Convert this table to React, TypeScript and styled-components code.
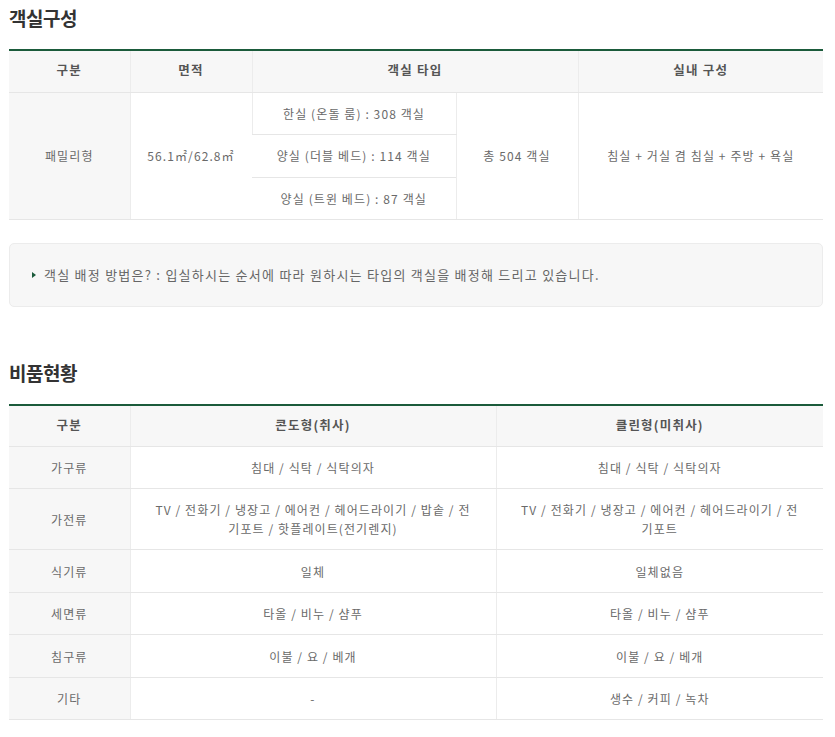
import styled, { createGlobalStyle } from 'styled-components';

const GlobalStyle = createGlobalStyle`
  body {
    margin: 0;
    background: #fff;
    font-family: "Noto Sans CJK KR", "Noto Sans", sans-serif;
    color: #666;
  }
`;

const Page = styled.div`
  width: 814px;
  padding: 0 12px 0 9px;
`;

const Section = styled.section`
  padding-top: 6px;
`;

const Title = styled.h2`
  margin: 0 0 19px;
  font-size: 19px;
  line-height: 24px;
  font-weight: 700;
  color: #333;
  letter-spacing: -0.5px;
`;

const Table = styled.table`
  width: 100%;
  border-collapse: collapse;
  table-layout: fixed;
  border-top: 2px solid #1b5b3b;
  font-size: 12px;
`;

const Row = styled.tr<{ $h?: number }>`
  height: ${(p) => p.$h ?? 42}px;
`;

const Th = styled.th`
  background: #f7f7f7;
  color: #555;
  font-weight: 700;
  font-size: 12.5px;
  letter-spacing: 1.2px;
  border-bottom: 1px solid #e6e6e6;
  border-left: 1px solid #ececec;
  padding: 0 10px 3px;
  &:first-child {
    border-left: none;
  }
`;

const Td = styled.td<{ $head?: boolean }>`
  background: ${(p) => (p.$head ? '#f7f7f7' : '#fff')};
  color: #6a6a6a;
  text-align: center;
  letter-spacing: 1.1px;
  line-height: 19px;
  border-bottom: 1px solid #e6e6e6;
  border-left: 1px solid #ececec;
  padding: 0 8px;
  &:first-child {
    border-left: none;
  }
`;

const InfoBox = styled.div`
  box-sizing: border-box;
  margin: 23px 0 48px;
  height: 64px;
  display: flex;
  align-items: center;
  gap: 8px;
  padding: 0 22px;
  background: #f7f7f7;
  border: 1px solid #ececec;
  border-radius: 5px;
  font-size: 13px;
  letter-spacing: 1.25px;
  color: #666;
`;

const Bullet = styled.span`
  width: 0;
  height: 0;
  border-top: 3px solid transparent;
  border-bottom: 3px solid transparent;
  border-left: 4px solid #1b5b3b;
  margin-top: 1px;
`;

const roomTypes = [
  '한실 (온돌 룸) : 308 객실',
  '양실 (더블 베드) : 114 객실',
  '양실 (트윈 베드) : 87 객실',
];

const amenities = [
  { kind: '가구류', h: 42, condo: '침대 / 식탁 / 식탁의자', clean: '침대 / 식탁 / 식탁의자' },
  {
    kind: '가전류',
    h: 61,
    condo: ['TV / 전화기 / 냉장고 / 에어컨 / 헤어드라이기 / 밥솥 / 전', '기포트 / 핫플레이트(전기렌지)'],
    clean: ['TV / 전화기 / 냉장고 / 에어컨 / 헤어드라이기 / 전', '기포트'],
  },
  { kind: '식기류', h: 43, condo: '일체', clean: '일체없음' },
  { kind: '세면류', h: 42, condo: '타올 / 비누 / 샴푸', clean: '타올 / 비누 / 샴푸' },
  { kind: '침구류', h: 43, condo: '이불 / 요 / 베개', clean: '이불 / 요 / 베개' },
  { kind: '기타', h: 42, condo: '-', clean: '생수 / 커피 / 녹차' },
];

function Lines({ text }: { text: string | string[] }) {
  if (typeof text === 'string') return <>{text}</>;
  return (
    <>
      {text.map((t, i) => (
        <span key={i}>
          {i > 0 && <br />}
          {t}
        </span>
      ))}
    </>
  );
}

function App() {
  return (
    <Page>
      <GlobalStyle />
      <Section>
        <Title>객실구성</Title>
        <Table>
          <colgroup>
            <col style={{ width: 121 }} />
            <col style={{ width: 122 }} />
            <col style={{ width: 204 }} />
            <col style={{ width: 122 }} />
            <col />
          </colgroup>
          <thead>
            <Row>
              <Th>구분</Th>
              <Th>면적</Th>
              <Th colSpan={2}>객실 타입</Th>
              <Th>실내 구성</Th>
            </Row>
          </thead>
          <tbody>
            {roomTypes.map((type, i) => (
              <Row key={type} $h={i === 1 ? 43 : 42}>
                {i === 0 && (
                  <>
                    <Td $head rowSpan={3}>패밀리형</Td>
                    <Td rowSpan={3}>56.1㎡/62.8㎡</Td>
                  </>
                )}
                <Td>{type}</Td>
                {i === 0 && (
                  <>
                    <Td rowSpan={3}>총 504 객실</Td>
                    <Td rowSpan={3}>침실 + 거실 겸 침실 + 주방 + 욕실</Td>
                  </>
                )}
              </Row>
            ))}
          </tbody>
        </Table>
        <InfoBox>
          <Bullet />
          객실 배정 방법은? : 입실하시는 순서에 따라 원하시는 타입의 객실을 배정해 드리고 있습니다.
        </InfoBox>
      </Section>

      <Section>
        <Title>비품현황</Title>
        <Table>
          <colgroup>
            <col style={{ width: 121 }} />
            <col style={{ width: 366 }} />
            <col />
          </colgroup>
          <thead>
            <Row>
              <Th>구분</Th>
              <Th>콘도형(취사)</Th>
              <Th>클린형(미취사)</Th>
            </Row>
          </thead>
          <tbody>
            {amenities.map((a) => (
              <Row key={a.kind} $h={a.h}>
                <Td $head>{a.kind}</Td>
                <Td><Lines text={a.condo} /></Td>
                <Td><Lines text={a.clean} /></Td>
              </Row>
            ))}
          </tbody>
        </Table>
      </Section>
    </Page>
  );
}

export default App;
